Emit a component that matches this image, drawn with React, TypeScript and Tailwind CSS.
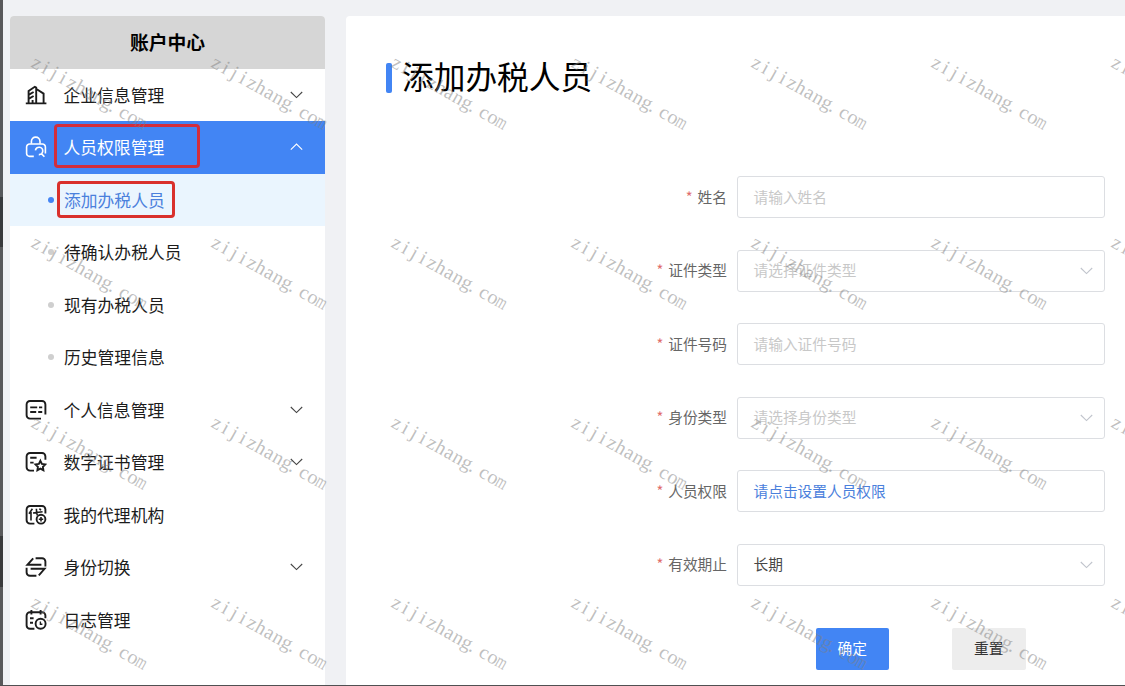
import type { ReactNode } from 'react'

interface MenuItem {
  label: string
  icon: ReactNode
  expandable?: boolean
  children?: string[]
}

interface Field {
  label: string
  text: string
  kind: 'input' | 'select' | 'link'
  filled?: boolean
}

const svgProps = {
  width: 22,
  height: 22,
  viewBox: '0 0 22 22',
  fill: 'none',
  stroke: 'currentColor',
  strokeWidth: 1.9,
}

function BuildingIcon() {
  return (
    <svg {...svgProps} className="shrink-0">
      <path d="M.8 19.4h20.6M3.6 19V7l6.2-4.2 1.4.8V19M11.4 5l7.2 4.6V19" />
      <path d="M4 10.6l4.6-2.6M4 14.6l4.6-2.6M7.6 19v-3" />
    </svg>
  )
}

function LockSearchIcon() {
  return (
    <svg {...svgProps} strokeWidth={1.6} className="shrink-0">
      <path d="M6.4 7.8V5.4a4.3 4.3 0 0 1 8.6 0v2.4" />
      <path d="M8.8 20.4H4.6a3 3 0 0 1-3-3v-6.4a3 3 0 0 1 3-3h12.8a3 3 0 0 1 3 3v6.6" />
      <path d="M10.4 14.4a3.7 3.7 0 1 1 3.4 4.2M16.4 17.6l3 3.2" />
    </svg>
  )
}

function ListIcon() {
  return (
    <svg {...svgProps} className="shrink-0">
      <path d="M16 19.6H5a3.4 3.4 0 0 1-3.4-3.4V5.4A3.4 3.4 0 0 1 5 2h12a3.4 3.4 0 0 1 3.4 3.4v10" />
      <path d="M5.2 8.4h7M14 8.4h3.2M5.2 13h6M13.2 13h4" />
    </svg>
  )
}

function CertIcon() {
  return (
    <svg {...svgProps} className="shrink-0">
      <path d="M9 19.6H5a3.4 3.4 0 0 1-3.4-3.4V5.4A3.4 3.4 0 0 1 5 2h12a3.4 3.4 0 0 1 3.4 3.4v3.4" />
      <path d="M5.2 6.8h6.4M5.2 11.6h3.4" />
      <path d="M15.4 9.8l1.5 3.1 3.4.5-2.4 2.4.5 3.4-3-1.6-3 1.6.5-3.4-2.4-2.4 3.4-.5z" />
    </svg>
  )
}

function AgentIcon() {
  return (
    <svg {...svgProps} className="shrink-0">
      <path d="M9.4 19.6H5a3.4 3.4 0 0 1-3.4-3.4V5.4A3.4 3.4 0 0 1 5 2h12a3.4 3.4 0 0 1 3.4 3.4v4.2" />
      <path d="M7.4 4.8L4 9.8M6 8v8.6M8 9l9.6-1.2M11.4 4.8c0 3 .2 5 1 6.6M14.4 4.6l1.6 1.6" strokeWidth="1.6" />
      <circle cx="16" cy="15.2" r="4.4" />
      <path d="M13.8 15.2h4.4M16 13v4.4" strokeWidth="1.6" />
    </svg>
  )
}

function SwitchIcon() {
  return (
    <svg {...svgProps} className="shrink-0">
      <path d="M8.2 2.4L2.4 8.8H16.4M10.6 2.2H17a3.4 3.4 0 0 1 3.4 3.4v5" />
      <path d="M13.8 19.4l5.8-6.6H5.6M11.4 19.8H5a3.4 3.4 0 0 1-3.4-3.4v-4.6" />
    </svg>
  )
}

function LogIcon() {
  return (
    <svg {...svgProps} className="shrink-0">
      <path d="M9.4 19.8H5a3.4 3.4 0 0 1-3.4-3.4V6.6A3.4 3.4 0 0 1 5 3.2h12a3.4 3.4 0 0 1 3.4 3.4v2.6" />
      <path d="M6.4 1v4.4M15.6 1v4.4M5 9.2h3.6M5 13.8h3" />
      <circle cx="15.6" cy="14.8" r="5" />
      <path d="M15.4 12.4v2.8h2" strokeWidth="1.4" />
    </svg>
  )
}

function Chevron({ up, className }: { up?: boolean; className: string }) {
  return (
    <svg width="13" height="8" viewBox="0 0 13 8" fill="none" stroke="currentColor" strokeWidth="1.1" className={className}>
      <path d={up ? 'M.8 6.6L6.5 1l5.7 5.6' : 'M.8 1l5.7 5.6L12.2 1'} />
    </svg>
  )
}

const MENU: MenuItem[] = [
  { label: '企业信息管理', icon: <BuildingIcon />, expandable: true },
  {
    label: '人员权限管理',
    icon: <LockSearchIcon />,
    expandable: true,
    children: ['添加办税人员', '待确认办税人员', '现有办税人员', '历史管理信息'],
  },
  { label: '个人信息管理', icon: <ListIcon />, expandable: true },
  { label: '数字证书管理', icon: <CertIcon />, expandable: true },
  { label: '我的代理机构', icon: <AgentIcon /> },
  { label: '身份切换', icon: <SwitchIcon />, expandable: true },
  { label: '日志管理', icon: <LogIcon /> },
]

const FIELDS: Field[] = [
  { label: '姓名', text: '请输入姓名', kind: 'input' },
  { label: '证件类型', text: '请选择证件类型', kind: 'select' },
  { label: '证件号码', text: '请输入证件号码', kind: 'input' },
  { label: '身份类型', text: '请选择身份类型', kind: 'select' },
  { label: '人员权限', text: '请点击设置人员权限', kind: 'link' },
  { label: '有效期止', text: '长期', kind: 'select', filled: true },
]

const ACTIVE_CHILD = '添加办税人员'

function SubItem({ label }: { label: string }) {
  const active = label === ACTIVE_CHILD
  return (
    <li className={`flex h-[52.5px] items-center pl-[38px] ${active ? 'bg-[#eaf5fe] text-[#4a80dc]' : 'text-[#1c1c1c]'}`}>
      <span className={`h-[6px] w-[6px] rounded-full ${active ? 'bg-[#4384f4]' : 'bg-[#cfcfcf]'}`} />
      <span className="relative ml-[10px]">
        {label}
        {active && <span className="absolute -left-[7px] -top-[7px] h-[37px] w-[118px] rounded-[4px] border-[3px] border-[#d9302c]" />}
      </span>
    </li>
  )
}

function Sidebar() {
  return (
    <aside className="w-[315px] shrink-0 rounded-t-sm bg-white">
      <h2 className="flex h-[52.5px] items-center justify-center rounded-t-sm bg-[#d6d6d6] text-[18.8px] font-bold text-black">
        账户中心
      </h2>
      <ul className="text-[16.8px] leading-[24px]">
        {MENU.map((item) => {
          const open = !!item.children
          return (
            <li key={item.label}>
              <div className={`flex h-[52.5px] items-center pl-[14.5px] pr-[22px] ${open ? 'bg-[#4285f4] text-white' : 'text-[#1c1c1c]'}`}>
                {item.icon}
                <span className="relative ml-[17px]">
                  {item.label}
                  {open && <span className="absolute -left-[10px] -top-[11px] h-[44px] w-[146px] rounded-[4px] border-[3px] border-[#d22d3c]" />}
                </span>
                {item.expandable && <Chevron up={open} className={`ml-auto ${open ? 'text-white' : 'text-[#444]'}`} />}
              </div>
              {item.children && (
                <ul>
                  {item.children.map((c) => <SubItem key={c} label={c} />)}
                </ul>
              )}
            </li>
          )
        })}
      </ul>
    </aside>
  )
}

function FormRow({ field }: { field: Field }) {
  let color = 'text-[#c8c8c8]'
  if (field.kind === 'link') color = 'text-[#4a80dc]'
  else if (field.filled) color = 'text-[#484848]'

  return (
    <div className="flex h-[42px] items-center text-[14.7px]">
      <label className="flex w-[391px] justify-end pr-[10px] text-[#666]">
        <span className="mr-[5px] text-[#e06c6c]">*</span>
        {field.label}
      </label>
      <div className={`flex h-full w-[368px] items-center justify-between rounded-[3px] border border-[#dcdee2] pl-[15.5px] pr-[11px] ${color}`}>
        <span>{field.text}</span>
        {field.kind === 'select' && <Chevron className="text-[#c0c4cc]" />}
      </div>
    </div>
  )
}

function Watermark() {
  return (
    <div className="pointer-events-none absolute inset-0 overflow-hidden">
      <div className="grid w-[1260px] grid-cols-7">
        {Array.from({ length: 28 }, (_, i) => (
          <svg key={i} width="180" height="180" viewBox="0 0 180 180" overflow="visible">
            <text
              transform="translate(29.5 66) rotate(29.5)"
              x="0.5 12.3 22.4 32.5 41 50.5 61.1 70.7 80.8 90 101.2 110.6 120"
              className="fill-[#808080]/50 font-['Liberation_Serif',serif] text-[20px]"
            >
              zijizhang.co
              <tspan textLength="10.5" lengthAdjust="spacingAndGlyphs">m</tspan>
            </text>
          </svg>
        ))}
      </div>
    </div>
  )
}

export default function App() {
  return (
    <div className="relative flex h-[686px] w-[1125px] overflow-hidden border-b border-[#505052] bg-[#f0f1f4] font-['Noto_Sans_CJK_SC',sans-serif]">
      {/* 窗口左侧边缘 */}
      <div className="flex w-[3px] shrink-0 flex-col bg-[#58585a]">
        <div className="mt-[197px] h-[50px] bg-[#39393b]" />
        <div className="mt-[289px] h-[51px] bg-[#39393b]" />
      </div>

      <div className="flex flex-1 pl-[7px] pt-[16px]">
        <Sidebar />
        <main className="ml-[21px] flex-1 rounded-tl-sm bg-white pt-[38px]">
          <h1 className="flex h-[48px] items-center pl-[40px] text-[31.7px] leading-[48px] text-black">
            <span className="mr-[10px] h-[30px] w-[6px] rounded-[2px] bg-[#4285f4]" />
            <span className="pb-[7px]">添加办税人员</span>
          </h1>

          <form className="mt-[74px] flex flex-col gap-[31.5px]">
            {FIELDS.map((f) => <FormRow key={f.label} field={f} />)}
          </form>

          <div className="mt-[42px] flex gap-[63px] pl-[469.5px] text-[14.7px]">
            <button className="h-[42px] w-[73.5px] rounded-[2px] bg-[#4285f4] text-white">确定</button>
            <button className="h-[42px] w-[73.5px] rounded-[2px] bg-[#ededed] text-[#333]">重置</button>
          </div>
        </main>
      </div>

      <Watermark />
    </div>
  )
}
